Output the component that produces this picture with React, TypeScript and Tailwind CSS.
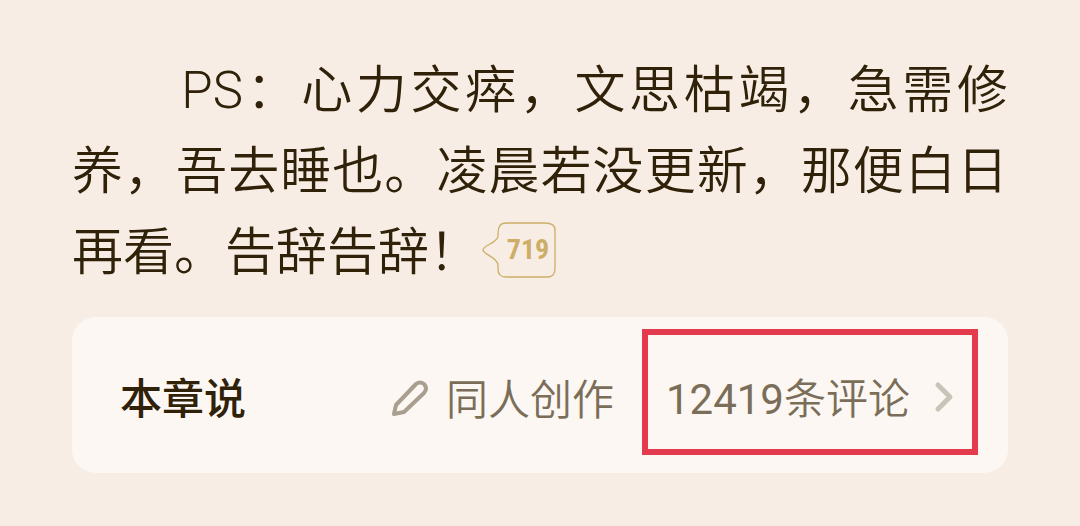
import React from "react";

function CommentBubble({ count }: { count: number }) {
  return (
    <button
      type="button"
      aria-label={`${count} comments`}
      className="relative mb-3 ml-0.5 inline-flex h-14 w-[74px] items-center justify-center pl-[18px] align-middle text-[#cdae68]"
    >
      <svg
        className="absolute inset-0"
        width="74"
        height="56"
        viewBox="0 0 74 56"
        fill="none"
        stroke="currentColor"
        strokeWidth="1.3"
      >
        <path d="M24 1H63Q73 1 73 8V46Q73 55 66 55H24Q16 55 16 47V43C16 36 1 32 1 28C1 23 16 21 16 14V11Q16 1 24 1Z" />
      </svg>
      <span className="font-['Roboto_Condensed',sans-serif] text-[28px] leading-none font-bold">
        {count}
      </span>
    </button>
  );
}

export default function App() {
  return (
    <div className="min-h-screen bg-[#f7ede4] px-[72px] pt-[46px] pb-12 font-['Noto_Sans_CJK_SC',sans-serif] text-[#302109]">
      {/* Texto del capitulo */}
      <p className="text-justify text-[51px] leading-[81px] font-[350]">
        {"\u3000\u3000"}
        <span className="font-['Roboto',sans-serif] leading-none font-light">PS</span>
        ：心力交瘁，文思枯竭，急需修养，吾去睡也。凌晨若没更新，那便白日再看。告辞告辞！
        <CommentBubble count={719} />
      </p>

      {/* Comentarios */}
      <div className="mt-[27px] flex h-[156px] items-center justify-between rounded-3xl bg-[#fcf7f3] pr-[30px] pl-12">
        <h2 className="text-[42px] font-medium">本章说</h2>
        <div className="flex h-full items-center text-[42px] font-[350] text-[#7b6e58]">
          <button type="button" className="flex items-center gap-4 pt-0.5">
            <svg
              className="text-[#a99f8f]"
              width="40"
              height="40"
              viewBox="0 0 40 40"
              fill="none"
              stroke="currentColor"
              strokeWidth="4"
              strokeLinejoin="round"
            >
              <path d="M4 38L6 29L26 8Q30 5 34 8Q38 12 34 17L14 36Z" />
            </svg>
            <span>同人创作</span>
          </button>
          <button
            type="button"
            className="relative ml-7 flex h-full items-center gap-6 px-6"
          >
            <span>
              <span className="font-['Roboto',sans-serif] leading-none font-normal">
                12419
              </span>
              条评论
            </span>
            <svg
              className="mt-1 text-[#c9c4b8]"
              width="20"
              height="32"
              viewBox="0 0 20 32"
              fill="none"
              stroke="currentColor"
              strokeWidth="5"
              strokeLinecap="round"
              strokeLinejoin="round"
            >
              <path d="M4 4L16 16L4 28" />
            </svg>
            <span className="absolute inset-x-0 top-3 bottom-[18px] border-6 border-[#e33a4d]" />
          </button>
        </div>
      </div>
    </div>
  );
}
